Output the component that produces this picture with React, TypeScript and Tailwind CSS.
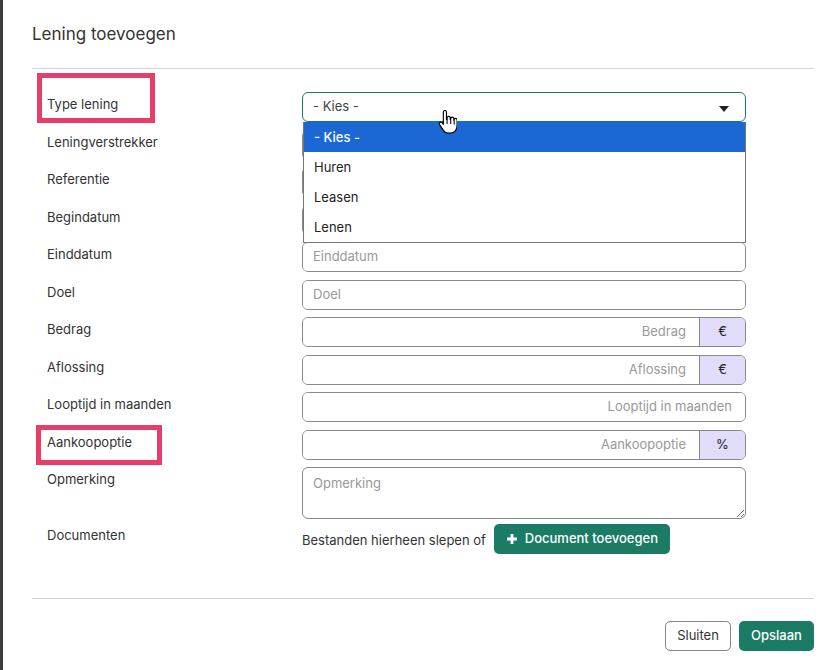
import { useState } from 'react';

type Field = {
  label: string;
  placeholder?: string;
  align?: 'left' | 'right';
  addon?: string;
};

// Velden onder de keuzelijst (de eerste drie zitten deels achter de open lijst)
const fields: Field[] = [
  { label: 'Leningverstrekker' },
  { label: 'Referentie' },
  { label: 'Begindatum' },
  { label: 'Einddatum', placeholder: 'Einddatum' },
  { label: 'Doel', placeholder: 'Doel' },
  { label: 'Bedrag', placeholder: 'Bedrag', align: 'right', addon: '€' },
  { label: 'Aflossing', placeholder: 'Aflossing', align: 'right', addon: '€' },
  { label: 'Looptijd in maanden', placeholder: 'Looptijd in maanden', align: 'right' },
  { label: 'Aankoopoptie', placeholder: 'Aankoopoptie', align: 'right', addon: '%' },
];

const options = ['- Kies -', 'Huren', 'Leasen', 'Lenen'];

function HandCursor() {
  return (
    <svg width="19" height="25" viewBox="0 0 18 24" className="absolute left-[136px] top-[18px] z-20">
      <path
        d="M5 2a1.5 1.5 0 0 1 3 0v7h.6V7.6a1.5 1.5 0 0 1 3 0V9h.5V8.4a1.5 1.5 0 0 1 3 0V10h.3v-.6a1.4 1.4 0 0 1 2.8 0v5.2c0 4.4-2.5 7.6-6.2 7.6H9.6c-2.4 0-3.7-1.2-5.1-3.4L1.4 14c-.8-1.1.1-2.6 1.4-2.4.6.1 1 .5 1.4 1L5 13.8Z"
        fill="#fff"
        stroke="#000"
        strokeWidth="1.1"
        strokeLinejoin="round"
      />
      <path d="M8.6 9v4.5M12.1 9.5v4M15.4 10.5v3.5" stroke="#000" strokeWidth="1" />
    </svg>
  );
}

function Row({ label, children, labelPad = 'pt-[2px]' }: { label: string; children: React.ReactNode; labelPad?: string }) {
  return (
    <div className="flex">
      <div className={`w-[270px] pl-[15px] text-[13px] leading-5 text-[#333] ${labelPad}`}>{label}</div>
      <div className="w-[444px]">{children}</div>
    </div>
  );
}

export default function App() {
  const [selected] = useState(0);

  return (
    <div className="relative flex min-h-[670px] bg-white" style={{ fontFamily: 'Inter, "Noto Sans", sans-serif' }}>
      <div className="w-[3px] shrink-0 bg-[#3c3c3c]" />

      <div className="flex-1 pl-[29px] pr-[20px]">
        {/* Kop */}
        <div className="h-[69px] border-b border-[#d6d6d6] pt-[22px]">
          <h1 className="text-[17px] leading-6 text-[#333]">Lening toevoegen</h1>
        </div>

        <div className="flex flex-col gap-[7.5px] pt-[23px]">
          <Row label="Type lening">
            <div className="relative z-10">
              <div className="flex h-[30px] items-center justify-between rounded-[6px] border border-[#1b7a63] pl-[10px] pr-[16px] text-[13px] text-[#444]">
                <span>- Kies -</span>
                <svg width="10" height="6" viewBox="0 0 10 6" className="mt-[4px]">
                  <path d="M0 0h10L5 6Z" fill="#222" />
                </svg>
              </div>
              {/* Open keuzelijst */}
              <ul className="absolute left-[1px] top-full w-[443px] border-x border-b border-[#767676] bg-white text-[13px] text-[#222]">
                {options.map((o, i) => (
                  <li
                    key={o}
                    className={
                      i === selected
                        ? 'flex h-[30px] items-center bg-[#1b67d3] pl-[10px] pt-px font-medium text-white'
                        : 'flex h-[30px] items-center pl-[10px] pt-px'
                    }
                  >
                    {o}
                  </li>
                ))}
              </ul>
              <HandCursor />
            </div>
          </Row>

          {fields.map((f) => (
            <Row key={f.label} label={f.label}>
              <div className="flex h-[30px] overflow-hidden rounded-[6px] border border-[#8a8a8a] text-[13px]">
                <input
                  placeholder={f.placeholder}
                  className={`min-w-0 flex-1 bg-white px-[10px] outline-none placeholder:text-[#999] ${
                    f.align === 'right' ? 'pr-[13px] text-right' : ''
                  }`}
                />
                {f.addon && (
                  <span className="flex w-[46px] items-center justify-center border-l border-[#8a8a8a] bg-[#e1dcfa] text-[#222]">
                    {f.addon}
                  </span>
                )}
              </div>
            </Row>
          ))}

          <Row label="Opmerking">
            <textarea
              placeholder="Opmerking"
              className="block h-[52px] w-full rounded-[6px] border border-[#8a8a8a] px-[10px] py-[6px] text-[13px] outline-none placeholder:text-[#999]"
            />
          </Row>
        </div>

        <div className="mt-[5px]">
          <Row label="Documenten" labelPad="pt-[1px]">
            <div className="flex items-center gap-[8px] text-[13px] text-[#333]">
              <span className="pt-[3px]">Bestanden hierheen slepen of</span>
              <button className="flex h-[30px] w-[176px] items-center justify-center gap-[7px] rounded-[5px] bg-[#1b7b64] text-[13px] font-medium text-white">
                <svg width="12" height="12" viewBox="0 0 12 12">
                  <path d="M6 1v10M1 6h10" stroke="#fff" strokeWidth="2.8" />
                </svg>
                Document toevoegen
              </button>
            </div>
          </Row>
        </div>

        <div className="mt-[44px] h-px bg-[#d6d6d6]" />

        <div className="flex justify-end gap-[8px] pt-[22px]">
          <button className="h-[30px] w-[66px] rounded-[5px] border border-[#888] text-[13px] text-[#333]">Sluiten</button>
          <button className="h-[30px] w-[75px] rounded-[5px] bg-[#1b7b64] text-[13px] font-medium text-white">Opslaan</button>
        </div>
      </div>

      {/* Markeringen */}
      <div className="pointer-events-none absolute left-[37px] top-[73px] h-[50px] w-[118px] border-[5px] border-[#e63e68]" />
      <div className="pointer-events-none absolute left-[36px] top-[425px] h-[40px] w-[126px] border-[5px] border-[#e63e68]" />
    </div>
  );
}
